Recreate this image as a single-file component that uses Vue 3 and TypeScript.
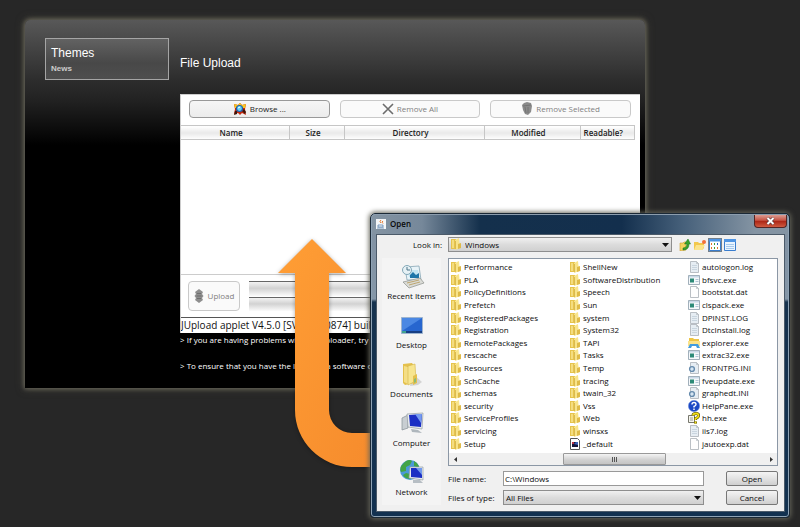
<script setup lang="ts">
import { ref } from 'vue'

type IconKind = 'folder' | 'doc' | 'text' | 'exe' | 'ini' | 'explorer' | 'help' | 'hh' | 'pif'
interface Entry { name: string; kind: IconKind }

const toEntries = (kind: IconKind, names: string[]): Entry[] => names.map(name => ({ name, kind }))

const entries: Entry[] = [
  ...toEntries('folder', [
    'Performance', 'PLA', 'PolicyDefinitions', 'Prefetch', 'RegisteredPackages', 'Registration',
    'RemotePackages', 'rescache', 'Resources', 'SchCache', 'schemas', 'security',
    'ServiceProfiles', 'servicing', 'Setup', 'ShellNew', 'SoftwareDistribution', 'Speech', 'Sun',
    'system', 'System32', 'TAPI', 'Tasks', 'Temp', 'tracing', 'twain_32', 'Vss', 'Web', 'winsxs',
  ]),
  { name: '_default', kind: 'pif' },
  { name: 'autologon.log', kind: 'text' },
  { name: 'bfsvc.exe', kind: 'exe' },
  { name: 'bootstat.dat', kind: 'doc' },
  { name: 'clspack.exe', kind: 'exe' },
  { name: 'DPINST.LOG', kind: 'text' },
  { name: 'DtcInstall.log', kind: 'text' },
  { name: 'explorer.exe', kind: 'explorer' },
  { name: 'extrac32.exe', kind: 'exe' },
  { name: 'FRONTPG.INI', kind: 'ini' },
  { name: 'fveupdate.exe', kind: 'exe' },
  { name: 'graphedt.INI', kind: 'ini' },
  { name: 'HelpPane.exe', kind: 'help' },
  { name: 'hh.exe', kind: 'hh' },
  { name: 'iis7.log', kind: 'text' },
  { name: 'jautoexp.dat', kind: 'doc' },
]

const places = ['Recent Items', 'Desktop', 'Documents', 'Computer', 'Network']
const columns = ['Name', 'Size', 'Directory', 'Modified', 'Readable?']
const fileName = ref('C:\\Windows')
const open = ref(true)
</script>

<template>
  <main class="page">
    <section class="panel">
      <nav class="themes">
        <a class="themes-title" href="#themes">Themes</a>
        <a class="themes-sub" href="#news">News</a>
      </nav>
      <div class="content">
        <h1>File Upload</h1>
        <div class="applet">
          <div class="toolbar">
            <button type="button" class="tool">
              <svg width="14" height="14" viewBox="0 0 14 14">
                <path d="M1 2l4 1 2-2 2 2 4-1-1 5 1 6-4-2-2 2-2-2-4 1 1-5z" fill="#c42a10" />
                <path d="M1 2l4 1 2-2 2 2 4-1-1 4H2z" fill="#f9c81e" />
                <path d="M2 9h2v3l-3 1zM9 9l3 3 1-2-2-3z" fill="#3d1408" />
                <circle cx="6.500" cy="6.500" r="3" fill="#68d4f6" stroke="#1d5fae" stroke-width="1.200" />
                <path d="M5 6l2-1" stroke="#fff" />
              </svg>
              Browse ...
            </button>
            <button type="button" class="tool" disabled>
              <svg width="12" height="12" viewBox="0 0 12 12">
                <path d="M1 1l10 10M11 1L1 11" stroke="#6c6c6c" stroke-width="1.600" fill="none" />
              </svg>
              Remove All
            </button>
            <button type="button" class="tool" disabled>
              <svg width="12" height="14" viewBox="0 0 12 14">
                <path d="M1 3l2-2 3-1 4 1 1 3-1 6-3 3-3-1-2-4z" fill="#8b8b8b" />
                <path d="M2 4l8-1M4 5l1 6M7 5v6" stroke="#747474" fill="none" />
              </svg>
              Remove Selected
            </button>
          </div>
          <table class="queue">
            <colgroup>
              <col class="c-name"><col class="c-size"><col class="c-dir"><col class="c-mod"><col class="c-read">
            </colgroup>
            <thead>
              <tr><th v-for="c in columns" :key="c" scope="col">{{ c }}</th></tr>
            </thead>
          </table>
          <div class="upload-row">
            <button type="button" class="upload" disabled>
              <svg width="10" height="14" viewBox="0 0 10 14">
                <path d="M5 0l4 3-1 2 1.500 2L8 9l1 2-4 3-4-3 1-2L.5 7 2 5 1 3z" fill="#8e8e8e" />
                <path d="M3 4.500h4M2.500 7h5M3 9.500h4" stroke="#6d6d6d" />
              </svg>
              Upload
            </button>
            <div class="bars"><div class="bar"></div><div class="bar"></div></div>
          </div>
          <div class="status">JUpload applet V4.5.0 [SVN rev 0874] buil</div>
        </div>
        <p>&gt; If you are having problems with the uploader, try th</p>
        <p>&gt; To ensure that you have the latest Java software on</p>
      </div>
    </section>

    <svg class="arrow" width="120" height="250" viewBox="0 0 120 250" aria-hidden="true">
      <defs>
        <linearGradient id="orange" x1="0" y1="0" x2="1" y2="1">
          <stop offset="0" stop-color="#ff9e35" />
          <stop offset="1" stop-color="#f58a2c" />
        </linearGradient>
      </defs>
      <path d="M42 9L76 43H59V180A23 23 0 0 0 82 203H120V237H82A57 57 0 0 1 25 180V43H8Z" fill="url(#orange)" />
    </svg>

    <section v-if="open" class="dialog" role="dialog" aria-labelledby="dialog-title">
      <header class="titlebar">
        <svg width="10" height="10" viewBox="0 0 10 10">
          <path d="M0 0h10v10H0z" fill="#f4f6f8" />
          <path d="M5 1q-2 1.500 0 3M7 2q-2 1 0 2.500" stroke="#e3762c" fill="none" />
          <path d="M2 6h5v2H2zM1 9h7" stroke="#5b84ad" fill="none" stroke-width=".8" />
        </svg>
        <h2 id="dialog-title">Open</h2>
        <button type="button" class="close" aria-label="Close" @click="open = false">
          <svg width="9" height="8" viewBox="0 0 9 8">
            <path d="M1.500 1l6 6M7.500 1l-6 6" stroke="#52343a" stroke-width="3.200" />
            <path d="M1.500 1l6 6M7.500 1l-6 6" stroke="#fff" stroke-width="2" />
          </svg>
        </button>
      </header>
      <div class="body">
        <div class="lookin">
          <label for="lookin">Look in:</label>
          <div class="combo folder-combo">
            <svg class="combo-icon" width="12" height="12" viewBox="0 0 12 12">
              <path d="M1 1h5v10H1z" fill="#e6c44c" /><path d="M2 2h2v8H2z" fill="#f4dd80" />
              <path d="M5 2l4-2 1 10-5 2z" fill="#f8e48a" /><path d="M5.500 3v8" stroke="#d3af42" stroke-width=".8" /><path d="M8 6l3-1v5l-3 1z" fill="#dfbb48" />
            </svg>
            <select id="lookin"><option>Windows</option></select>
            <svg class="chevron" width="7" height="4" viewBox="0 0 7 4"><path d="M0 0h7L3.500 4z" fill="#111" /></svg>
          </div>
          <div class="views">
            <button type="button" aria-label="Up one level">
              <svg width="12" height="12" viewBox="0 0 12 12">
                <path d="M1 4h3l1-1h2v8l-6 1z" fill="#f4d35e" stroke="#c99f33" stroke-width=".6" />
                <path d="M4 9q4 0 4-4H5.500L9 0l2.500 5H10q0 6-6 6z" fill="#36a12c" stroke="#1a7118" stroke-width=".5" />
              </svg>
            </button>
            <button type="button" aria-label="New folder">
              <svg width="12" height="12" viewBox="0 0 12 12">
                <path d="M0 3h4l1 1h5v5l-2 2H0z" fill="#f2c84c" /><path d="M2 6h9l-3 5H0z" fill="#fbe48c" />
                <circle cx="10" cy="3" r="2" fill="#f0703a" />
              </svg>
            </button>
            <button type="button" class="pressed" aria-label="List view">
              <svg width="12" height="12" viewBox="0 0 12 12">
                <path d="M.5.5h11v11H.5z" fill="#fff" stroke="#397dce" /><path d="M0 0h12v2.500H0z" fill="#4f95e3" />
                <path d="M2.500 4v2M2.500 8v2M8.500 8v2" stroke="#e4742a" /><path d="M5.500 4v2M5.500 8v2" stroke="#3b9c38" /><path d="M8.500 4v2" stroke="#2a61c4" />
              </svg>
            </button>
            <button type="button" aria-label="Details view">
              <svg width="12" height="12" viewBox="0 0 12 12">
                <path d="M.5.5h11v11H.5z" fill="#e9f4ff" stroke="#397dce" /><path d="M0 0h12v3H0z" fill="#4f95e3" />
                <path d="M2 5.500h8M2 7.500h8M2 9.500h8" stroke="#a5c9ec" />
              </svg>
            </button>
          </div>
        </div>

        <div class="main">
          <nav class="places">
            <button v-for="p in places" :key="p" type="button" class="place">
              <svg width="28" height="28" viewBox="0 0 28 28">
                <g v-if="p === 'Recent Items'">
                  <path d="M7 5l14-1 2 14H9z" fill="#e8f3f8" stroke="#87a6b5" stroke-width=".8" />
                  <path d="M10 8h10l1 7H11z" fill="#c3e5f2" /><path d="M12 13l3-3 3 3 3-2v5h-9z" fill="#1e76a9" />
                  <path d="M5 20l17-4 4 5-15 5z" fill="#dadbd6" stroke="#8c908d" stroke-width=".7" />
                  <path d="M9 21l12-3M11 23l11-3" stroke="#b08e42" stroke-width=".7" />
                  <circle cx="9" cy="8" r="4.500" fill="#e6f1f5" stroke="#83a8b8" /><path d="M9 5v3h3" stroke="#4c7488" fill="none" />
                </g>
                <g v-else-if="p === 'Desktop'">
                  <path d="M3.500 6.500h21v16h-21z" fill="#2766cf" stroke="#9db4cf" />
                  <path d="M4 7h20L4 20z" fill="#4b88e3" /><path d="M4 20h20v2H4z" fill="#173e83" /><path d="M4 20h4v2H4z" fill="#40a38f" />
                </g>
                <g v-else-if="p === 'Documents'">
                  <path d="M15 14l9 8-4 3-8 1z" fill="#d4d4d4" /><path d="M5 4l9-1 2 3v17l-9 2-2-2z" fill="#e4c04c" />
                  <path d="M6 6l4 1v17l-4-2z" fill="#f4de85" />
                  <path d="M10 6l7-2 1 17-8 4z" fill="#f7e58f" stroke="#d4b347" stroke-width=".6" />
                  <path d="M15 16l4-2v9l-4 2z" fill="#e4c04c" /><path d="M16 19l2-1v4l-2 1z" fill="#8ebc73" />
                </g>
                <g v-else-if="p === 'Computer'">
                  <path d="M4 9l6-3v13l-6 2z" fill="#c8ced2" stroke="#858f96" stroke-width=".7" />
                  <path d="M13 20l7 1 4 3-10-1z" fill="#afb7bd" />
                  <path d="M9 5l16-1-1 16-14-2z" fill="#e9ecee" stroke="#939da3" stroke-width=".7" />
                  <path d="M11 6l13-1-1 13-11-1z" fill="#1b2fc4" /><path d="M17 5l7 0-1 9z" fill="#759bf0" />
                </g>
                <g v-else>
                  <circle cx="12" cy="12" r="10" fill="#4a9ad7" />
                  <path d="M5 6q5-6 9-3l-2 4-4 2v4l-5 1q-2-5 2-8M8 15l4 1 1 5q-6 0-8-4zM16 3q5 3 5 7l-5-2z" fill="#42a447" />
                  <path d="M12 9l13 0v13l-14-2z" fill="#e9ecee" stroke="#939da3" stroke-width=".7" />
                  <path d="M13 10l11 0v10l-11-1z" fill="#1b2fc4" /><path d="M18 10h6v7z" fill="#7299ed" />
                  <path d="M15 22l7 0 3 3-10 0z" fill="#b7bec4" />
                </g>
              </svg>
              <span>{{ p }}</span>
            </button>
          </nav>

          <div class="right">
            <div class="list">
              <ul>
                <li v-for="e in entries" :key="e.name">
                  <svg width="12" height="12" viewBox="0 0 12 12">
                    <g v-if="e.kind === 'folder'">
                      <path d="M1 1h5v10H1z" fill="#e6c44c" /><path d="M2 2h2v8H2z" fill="#f4dd80" />
                      <path d="M5 2l4-2 1 10-5 2z" fill="#f8e48a" /><path d="M5.500 3v8" stroke="#d3af42" stroke-width=".8" />
                      <path d="M8 6l3-1v5l-3 1z" fill="#dfbb48" />
                    </g>
                    <g v-else-if="e.kind === 'doc' || e.kind === 'text' || e.kind === 'ini'">
                      <path d="M2.500.5h6l2 2v9h-8z" :fill="e.kind === 'doc' ? '#fefefe' : '#e6edf3'" stroke="#a9b0b6" stroke-width=".8" />
                      <path d="M8.500.5v2h2" fill="none" stroke="#a9b0b6" stroke-width=".6" />
                      <path v-if="e.kind === 'text'" d="M4 4.500h5M4 6.500h5M4 8.500h5" stroke="#c9d5df" />
                      <circle v-if="e.kind === 'ini'" cx="4" cy="7" r="2.400" fill="#d6e6f3" stroke="#668bad" stroke-width="1.400" />
                    </g>
                    <g v-else-if="e.kind === 'exe'">
                      <path d="M.5 1.500h11v9H.5z" fill="#f5f8fa" stroke="#8c9caa" stroke-width=".8" /><path d="M1 2h10v1.500H1z" fill="#c9d9e8" />
                      <path d="M2 4.500h4v4H2z" fill="#2d8a77" /><path d="M7.500 5.500h3M7.500 7.500h3" stroke="#9fb8cb" stroke-width=".8" />
                    </g>
                    <g v-else-if="e.kind === 'explorer'">
                      <path d="M1 1h4l1 1h5v6H1z" fill="#eec544" /><path d="M0 4h12v5H0z" fill="#fbe38a" />
                      <path d="M2 7h8l2 4H9L8 9H4l-1 2H0z" fill="#429cdf" />
                    </g>
                    <g v-else-if="e.kind === 'help'">
                      <circle cx="6" cy="6" r="5.700" fill="#1c49c5" stroke="#7b9be4" stroke-width=".5" />
                      <path d="M4 4.500Q4 2.500 6 2.500t2 2Q8 5.500 6 6.500v1M6 8.500v1.500" fill="none" stroke="#fff" stroke-width="1.400" />
                    </g>
                    <g v-else-if="e.kind === 'hh'">
                      <path d="M.5 3.500h6v7h-6z" fill="#f5f5ee" stroke="#77776d" /><path d="M2 6h3M2 8h3" stroke="#99998f" />
                      <path d="M5 3.500Q5 1.500 8 1.500t2.500 2.500Q10 6 7.500 6.500v1.500M7.500 9.500v2" fill="none" stroke="#4d4705" stroke-width="3" />
                      <path d="M5 3.500Q5 1.500 8 1.500t2.500 2.500Q10 6 7.500 6.500v1.500M7.500 9.500v2" fill="none" stroke="#f3df16" stroke-width="1.800" />
                    </g>
                    <g v-else>
                      <path d="M1.500.5h7l2 2v9h-9z" fill="#fff" stroke="#555" /><path d="M3 4h6v5H3z" fill="#15153a" />
                      <path d="M3 4h2v2H3z" fill="#bb3345" /><path d="M5 6l2-2h2v3z" fill="#3d63bb" />
                    </g>
                  </svg>
                  <span>{{ e.name }}</span>
                </li>
              </ul>
              <div class="scroll">
                <button type="button" aria-label="Scroll left"><svg width="3" height="5" viewBox="0 0 3 5"><path d="M3 0v5L0 2.500z" fill="#333" /></svg></button>
                <div class="track"><div class="thumb"><svg width="7" height="5" viewBox="0 0 7 5"><path d="M1.500 0v5M3.500 0v5M5.500 0v5" stroke="#555" /></svg></div></div>
                <button type="button" aria-label="Scroll right"><svg width="3" height="5" viewBox="0 0 3 5"><path d="M0 0v5l3-2.500z" fill="#333" /></svg></button>
              </div>
            </div>
            <form class="fields" @submit.prevent>
              <label for="fname">File name:</label>
              <input id="fname" v-model="fileName" type="text">
              <button type="submit">Open</button>
              <label for="ftype">Files of type:</label>
              <div class="combo">
                <select id="ftype"><option>All Files</option></select>
                <svg class="chevron" width="7" height="4" viewBox="0 0 7 4"><path d="M0 0h7L3.500 4z" fill="#111" /></svg>
              </div>
              <button type="button" @click="open = false">Cancel</button>
            </form>
          </div>
        </div>
      </div>
    </section>
  </main>
</template>

<style>
body { background: #272727; }
</style>

<style scoped>
* { box-sizing: border-box; }
.page {
  position: relative;
  min-height: 100vh;
  padding: 20px 155px 20px 25px;
  overflow: hidden;
  background: #272727;
  font-family: "Open Sans", "Noto Sans", sans-serif;
  font-size: 8px;
  line-height: 12px;
}
button, input, select { font: inherit; color: inherit; margin: 0; }
h1, h2, p, ul { margin: 0; padding: 0; font-weight: normal; }
svg { flex: none; display: block; }

.panel {
  display: grid;
  grid-template-columns: 124px minmax(0, 1fr);
  gap: 11px;
  padding: 18px 5px 15px 20px;
  border-radius: 5px 5px 0 0;
  background: linear-gradient(#585858 0, #2d2d2d 60px, #222 80px, #000 125px);
  box-shadow: 0 0 4px 1px #69675a, 0 0 10px #4a483d;
}
.themes {
  align-self: start;
  display: flex;
  flex-direction: column;
  height: 42px;
  padding: 6px 5px;
  border: 1px solid #a5a5a5;
  background: linear-gradient(#626262, #484848 60%, #4e4e4e);
  color: #fff;
}
.themes a { color: inherit; text-decoration: none; }
.themes-title, h1 {
  font-family: "Liberation Sans", sans-serif;
  font-size: 12px;
  line-height: 16px;
  color: #fff;
}
.themes .themes-sub { font: bold 8px/16px "Liberation Sans", sans-serif; color: #ccc; }
h1 { padding: 17px 0 23px; }

.applet { overflow: hidden; border-left: 1px solid #ccc; background: #fff; color: #222; }
.toolbar {
  display: grid;
  grid-template-columns: repeat(3, 1fr);
  gap: 10px;
  padding: 5px 9px 7px 8px;
  border-top: 1px solid #ccc;
}
.tool {
  display: flex;
  align-items: center;
  justify-content: center;
  gap: 3px;
  height: 18px;
  padding: 0;
  border: 1px solid #999;
  border-radius: 4px;
  background: linear-gradient(#f6f6f6, #ececec);
}
.tool:disabled, .upload:disabled { color: #808080; border-color: #c9c9c9; background: #fafafa; }
.queue { width: calc(100% - 5px); table-layout: fixed; border-collapse: collapse; }
.queue th {
  height: 14px;
  padding: 0 8px 0 0;
  border: 1px solid #c6c6c6;
  border-left: 0;
  background: linear-gradient(#fff, #e9e9e9 50%, #fff);
  font-weight: 600;
  line-height: 12px;
}
.c-name { width: 24%; }
.c-size { width: 12%; }
.c-dir { width: 31%; }
.c-mod { width: 21%; }
.c-read { width: 12%; }
.upload-row {
  display: flex;
  gap: 9px;
  margin-top: 134px;
  padding: 6px 0 6px 7px;
  border-top: 1px solid #ccc;
}
.upload {
  display: flex;
  align-items: center;
  justify-content: center;
  gap: 4px;
  width: 52px;
  height: 30px;
  padding: 0;
  border: 1px solid;
  border-radius: 4px;
}
.bars { flex: 1; display: grid; gap: 1px; }
.bar { border-top: 1px solid #666; background: linear-gradient(#f3f3f3, #d2d2d2 45%, #fbfbfb); }
.status {
  height: 16px;
  border-top: 1px solid #555;
  color: #111;
  font-size: 10px;
  line-height: 15px;
  white-space: nowrap;
}
.content p { height: 14px; color: #fff; line-height: 14px; white-space: nowrap; overflow: hidden; }
.content p + p { margin-top: 12px; }

.arrow { position: absolute; left: 270px; top: 230px; filter: drop-shadow(0 1px 2px #0005); }

.dialog {
  position: absolute;
  left: 370px;
  right: 10px;
  top: 213px;
  padding: 0 4px 5px 5px;
  border: 1px solid #1b2936;
  border-radius: 5px 5px 4px 4px;
  background: linear-gradient(#8090a1 0, #8597a8 85px, #16324e 88px, #123150 100%);
  box-shadow: inset 0 0 0 1px #8fa3b5, 0 0 5px 1px #66665a;
  color: #0c0c0c;
}
.titlebar {
  display: flex;
  align-items: flex-start;
  gap: 4px;
  height: 20px;
  margin: 0 -3px 0 -4px;
  padding: 0 1px 0 4px;
  border-top: 1px solid #8c9dae;
  border-radius: 4px 4px 0 0;
  background: linear-gradient(90deg, #8494a3, #76889a 12%, #14304c 26%, #132f4d 60%, #47617b 75%, #8494a3 92%);
}
.titlebar > svg { margin-top: 4px; }
h2 { flex: 1; font-size: 8px; font-weight: 600; line-height: 18px; color: #080808; }
.close {
  display: flex;
  align-items: center;
  justify-content: center;
  width: 33px;
  height: 13px;
  padding: 0;
  border: 1px solid #532525;
  border-top: 0;
  border-radius: 0 0 4px 4px;
  background: linear-gradient(#dc9d93, #c65242 45%, #ac2414 50%, #cf5a40);
}
.body { padding: 2px 6px 6px 5px; border: 1px solid #4b5a69; background: #f0f0f0; }
.lookin { display: grid; grid-template-columns: 60px minmax(0, 1fr) 100px; align-items: center; gap: 6px; }
.lookin label { text-align: right; }
.combo { position: relative; }
.combo select {
  appearance: none;
  display: block;
  width: 100%;
  height: 15px;
  padding: 0 14px 0 2px;
  border: 1px solid #8e8e8e;
  border-radius: 0;
  background: linear-gradient(#f0f0f0, #dcdcdc 50%, #d0d0d0);
  line-height: 12px;
}
.folder-combo select { padding-left: 16px; }
.combo-icon { position: absolute; left: 2px; top: 1px; }
.chevron { position: absolute; right: 3px; top: 6px; }
.views { display: flex; gap: 1px; }
.views button { display: grid; place-items: center; width: 14px; height: 14px; padding: 0; border: 1px solid transparent; background: none; }
.views .pressed { border-color: #72808d; background: #bfd5ea; }
.main { display: grid; grid-template-columns: 59px minmax(0, 1fr); gap: 7px; margin-top: 6px; }
.places { display: flex; flex-direction: column; gap: 9px; padding: 4px 0 0; background: #f4f4f4; }
.place { display: grid; justify-items: center; padding: 0; border: 0; background: none; white-space: nowrap; }
.list { border: 1px solid #8b97a5; background: #fff; }
ul {
  display: grid;
  grid-auto-flow: column;
  grid-template: repeat(15, minmax(0, 1fr)) / 119px 119px 1fr;
  height: 194px;
  padding: 2px 0 3px 1px;
  list-style: none;
}
li { display: flex; align-items: center; gap: 2px; white-space: nowrap; }
.scroll { display: flex; height: 12px; background: #f0f0f0; }
.scroll button { display: grid; place-items: center; width: 12px; padding: 0; border: 0; background: none; }
.track { flex: 1; padding-left: 31%; }
.thumb {
  display: grid;
  place-items: center;
  width: 51%;
  height: 100%;
  border: 1px solid #999;
  border-radius: 1px;
  background: linear-gradient(#f4f4f4, #d0d0d0 60%, #c4c4c4);
}
.fields {
  display: grid;
  grid-template-columns: 49px minmax(0, 1fr) 52px;
  align-items: center;
  gap: 4px 6px;
  margin-top: 5px;
}
.fields button {
  height: 15px;
  padding: 0;
  border: 1px solid #777;
  border-radius: 2px;
  background: linear-gradient(#f4f4f4, #e2e2e2 50%, #cfcfcf);
  line-height: 12px;
}
.fields input {
  height: 15px;
  padding: 0 1px;
  border: 1px solid #999;
  background: #fff;
}
.fields input, .fields .combo { width: calc(100% - 16px); }
</style>
